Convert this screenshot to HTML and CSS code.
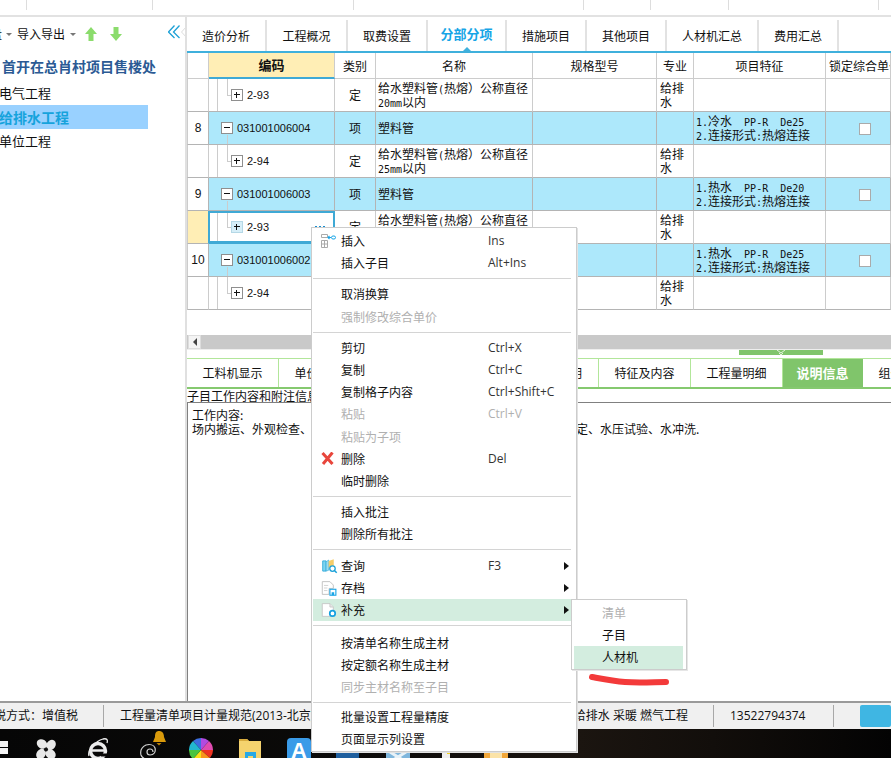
FILE: index.html
```html
<!DOCTYPE html>
<html lang="zh">
<head>
<meta charset="utf-8">
<title>分部分项</title>
<link rel="stylesheet" href="styles.css">
</head>
<body>
<div class="app">
  <div class="strip">
    <i class="s1"></i><i class="s2"></i><i class="s3"></i><i class="s4"></i><i class="s5"></i><i class="s6"></i><i class="s7"></i>
  </div>
  <div class="workspace">
    <aside class="side">
      <div class="tools">
        <span class="cut">盘</span><b class="caret c1"></b>
        <span class="tool-label">导入导出</span><b class="caret c2"></b>
        <svg class="arrow a1" width="12" height="14" viewBox="0 0 12 14"><path d="M6 0 12 7H8.500V14H3.500V7H0Z" fill="#8bdc6c"/></svg>
        <svg class="arrow a2" width="12" height="14" viewBox="0 0 12 14"><path d="M6 14 12 7H8.500V0H3.500V7H0Z" fill="#8bdc6c"/></svg>
        <svg class="collapse" width="20" height="14" viewBox="0 0 20 14"><path d="M6.500 .5 .5 7l6 6M11.500 .5 5.500 7l6 6" fill="none" stroke="#1ea1d6" stroke-width="1.300"/><path d="M19 1 13.500 7 19 13" fill="none" stroke="#ddd" stroke-width="1"/></svg>
      </div>
      <div class="side-title">首开在总肖村项目售楼处</div>
      <div class="side-item">电气工程</div>
      <div class="side-item on">给排水工程</div>
      <div class="side-item">单位工程</div>
    </aside>
    <main class="main">
      <nav class="tabs">
        <a class="tab">造价分析</a><a class="tab w81">工程概况</a><a class="tab">取费设置</a><a class="tab w79 on">分部分项</a><a class="tab">措施项目</a><a class="tab">其他项目</a><a class="tab w92">人材机汇总</a><a class="tab">费用汇总</a>
      </nav>
      <div class="grid-wrap">
        <table class="grid">
          <colgroup><col class="c-no"><col class="c-code"><col class="c-type"><col class="c-name"><col class="c-spec"><col class="c-major"><col class="c-feat"><col class="c-lock"></colgroup>
          <thead>
            <tr><th></th><th class="hl">编码</th><th>类别</th><th>名称</th><th>规格型号</th><th>专业</th><th>项目特征</th><th class="clip">锁定综合单价</th></tr>
          </thead>
          <tbody>
            <tr>
              <td></td><td class="code child"><div class="node"><span class="box plus"></span>2-93</div></td><td class="ctr">定</td>
              <td class="txt">给水塑料管<span class="m">(</span>热熔）公称直径<br><span class="m">20mm</span>以内</td><td></td><td class="txt major">给排水</td><td></td><td></td>
            </tr>
            <tr class="item">
              <td class="no">8</td><td class="code parent"><div class="node"><span class="box minus"></span>031001006004</div></td><td class="ctr">项</td>
              <td class="txt">塑料管</td><td></td><td></td><td class="txt"><span class="m">1.</span>冷水<span class="m">  PP-R  De25</span><br><span class="m">2.</span>连接形式<span class="m">:</span>热熔连接</td><td class="ctr lock"><span class="check"></span></td>
            </tr>
            <tr>
              <td></td><td class="code child"><div class="node"><span class="box plus"></span>2-94</div></td><td class="ctr">定</td>
              <td class="txt">给水塑料管<span class="m">(</span>热熔）公称直径<br><span class="m">25mm</span>以内</td><td></td><td class="txt major">给排水</td><td></td><td></td>
            </tr>
            <tr class="item">
              <td class="no">9</td><td class="code parent"><div class="node"><span class="box minus"></span>031001006003</div></td><td class="ctr">项</td>
              <td class="txt">塑料管</td><td></td><td></td><td class="txt"><span class="m">1.</span>热水<span class="m">  PP-R  De20</span><br><span class="m">2.</span>连接形式<span class="m">:</span>热熔连接</td><td class="ctr lock"><span class="check"></span></td>
            </tr>
            <tr>
              <td class="cur"></td><td class="code child sel"><div class="node"><span class="box plus pale"></span>2-93<span class="dots"></span></div></td><td class="ctr">定</td>
              <td class="txt">给水塑料管<span class="m">(</span>热熔）公称直径<br><span class="m">20mm</span>以内</td><td></td><td class="txt major">给排水</td><td></td><td></td>
            </tr>
            <tr class="item">
              <td class="no">10</td><td class="code parent"><div class="node"><span class="box minus"></span>031001006002</div></td><td class="ctr">项</td>
              <td class="txt">塑料管</td><td></td><td></td><td class="txt"><span class="m">1.</span>热水<span class="m">  PP-R  De25</span><br><span class="m">2.</span>连接形式<span class="m">:</span>热熔连接</td><td class="ctr lock"><span class="check"></span></td>
            </tr>
            <tr>
              <td></td><td class="code child"><div class="node"><span class="box plus"></span>2-94</div></td><td class="ctr">定</td>
              <td class="txt">给水塑料管<span class="m">(</span>热熔）公称直径<br><span class="m">25mm</span>以内</td><td></td><td class="txt major">给排水</td><td></td><td></td>
            </tr>
          </tbody>
        </table>
      </div>
      <div class="hscroll"><span class="hbtn"><b></b></span></div>
      <div class="splitter"><span class="grip"><svg width="10" height="5" viewBox="0 0 10 5"><path d="M1 0 5 3 9 0M3 3 5 5 7 3" fill="none" stroke="#e4f3de" stroke-width="1"/></svg></span></div>
      <nav class="subtabs">
        <a class="st w92">工料机显示</a><a class="st w80">单价构成</a><a class="st w80">标准换算</a><a class="st w80">换算信息</a><a class="st w80">安装费用</a><a class="st w92">特征及内容</a><a class="st w92">工程量明细</a><a class="st w80 on">说明信息</a><a class="st w80">组价方案</a>
      </nav>
      <div class="caption">子目工作内容和附注信息</div>
      <div class="notes">工作内容:<br>场内搬运、外观检查、切管、热熔连接、管道管件安装、栽钩件、管道固定、水压试验、水冲洗.</div>
    </main>
  </div>
  <footer class="status">
    <div class="sc s-tax"><span>计税方式：增值税</span></div>
    <div class="sc s-spec"><span>工程量清单项目计量规范(2013-北京)</span><span>北京市建设工程预算定额 给排水 采暖 燃气工程</span></div>
    <div class="sc s-tel">13522794374</div>
    <div class="s-btn"></div>
  </footer>
  <div class="taskbar">
    <svg class="t-win" width="9" height="20" viewBox="0 0 9 20"><path d="M0 3h8v6H0zM0 10h8v6H0z" fill="#f4f4f4"/></svg>
    <svg class="t-fan" width="22" height="24" viewBox="0 0 22 24"><g fill="#e8e8e8"><ellipse cx="7" cy="6" rx="5.500" ry="4.500" transform="rotate(35 7 6)"/><ellipse cx="16" cy="7" rx="4.500" ry="5.500" transform="rotate(35 16 7)"/><ellipse cx="15.500" cy="16" rx="5.500" ry="4.500" transform="rotate(35 15.500 16)"/><ellipse cx="6" cy="16" rx="4.500" ry="5.500" transform="rotate(35 6 16)"/></g><circle cx="11" cy="11.500" r="2" fill="#111"/></svg>
    <svg class="t-ie" width="22" height="24" viewBox="0 0 22 24"><circle cx="11" cy="13" r="7.500" fill="none" stroke="#ececec" stroke-width="3.500"/><path d="M4 12.500h14" stroke="#ececec" stroke-width="2.500"/><path d="M14 15.500h8v3h-8z" fill="#0a0908"/><path d="M2 18C0 12 9 3 16 1c4-1 5 1 4 4" fill="none" stroke="#ececec" stroke-width="1.300"/></svg>
    <svg class="t-swirl" width="29" height="35" viewBox="0 -11 29 35"><path d="M15 14a3 3 0 1 0-3 3c4 0 6-3 5-7-1-3-5-4-9-3-4 2-6 6-5 10 1 3 5 5 8 4" fill="none" stroke="#cfcfcf" stroke-width="1.200"/><path d="M21 -7c3 0 5 2 5 6l2 5H15l2-5c0-4 1-6 4-6z" fill="#d99a0b"/><path d="M18.500 5h5l-2.500 2.500z" fill="#b87f07"/></svg>
    <svg class="t-pie" width="24" height="24" viewBox="0 0 24 24"><path d="M12 12 4 3a12 12 0 0 1 8-3z" fill="#3c6fe0"/><path d="M12 12V0a12 12 0 0 1 8 3z" fill="#b14be0"/><path d="M12 12 20 3a12 12 0 0 1 4 9z" fill="#e04bb0"/><path d="M12 12h12a12 12 0 0 1-3 8z" fill="#ee3322"/><path d="M12 12l9 8a12 12 0 0 1-9 4z" fill="#f7941d"/><path d="M12 12v12a12 12 0 0 1-8-3z" fill="#f7e018"/><path d="M12 12l-8 9a12 12 0 0 1-4-9z" fill="#49c43f"/><path d="M12 12H0a12 12 0 0 1 4-9z" fill="#22b8d0"/></svg>
    <svg class="t-folder" width="22" height="24" viewBox="0 0 22 24"><path d="M0 1h8l2 2h12v21H0z" fill="#f5d36e"/><path d="M0 1h8l2 2H0z" fill="#d9ac3e"/><path d="M6 14h11v10H6z" fill="#28a8e6"/><path d="M9 18h5v6H9z" fill="#f5d36e"/></svg>
    <svg class="t-app" width="24" height="24" viewBox="0 0 24 24"><rect width="24" height="24" rx="4" fill="#3a9be8"/><text x="12" y="20" text-anchor="middle" class="t-a">A</text></svg>
    <svg class="t-db" width="23" height="24" viewBox="0 0 23 24"><rect width="23" height="24" fill="#1f5f9e"/></svg>
    <svg class="t-blue" width="24" height="24" viewBox="0 0 24 24"><rect width="24" height="24" fill="#7fb6dc"/><path d="M4 14l16 10M20 14 4 24" stroke="#e8f2f8" stroke-width="3"/></svg>
    <svg class="t-doc" width="8" height="24" viewBox="0 0 8 24"><rect y="15" width="8" height="9" fill="#eee"/><rect x="5" y="13" width="3" height="3" fill="#f2d21b"/></svg>
    <svg class="t-orange" width="24" height="24" viewBox="0 0 24 24"><rect y="12" width="24" height="12" rx="2" fill="#f2a73a"/><rect x="6" y="14" width="12" height="10" fill="#fbe3a8"/></svg>
  </div>

  <div class="menu">
    <div class="mi"><span class="ic"><svg width="15" height="15" viewBox="0 0 15 15"><path d="M.5 .5h6v3h-6zM.5 6.500h6v7h-6zM3.500 6.500v7M.5 10h6" fill="none" stroke="#aaa"/><path d="M7 3.500h3M8.500 2 7 3.500 8.500 5" fill="none" stroke="#19a5e6" stroke-width="1.100"/><rect x="10.500" y="2" width="4" height="3" rx="1.500" fill="none" stroke="#19a5e6"/></svg></span><span>插入</span><span class="key">Ins</span></div>
    <div class="mi"><span class="ic"></span><span>插入子目</span><span class="key">Alt+Ins</span></div>
    <hr>
    <div class="mi"><span class="ic"></span><span>取消换算</span></div>
    <div class="mi off"><span class="ic"></span><span>强制修改综合单价</span></div>
    <hr>
    <div class="mi"><span class="ic"></span><span>剪切</span><span class="key">Ctrl+X</span></div>
    <div class="mi"><span class="ic"></span><span>复制</span><span class="key">Ctrl+C</span></div>
    <div class="mi"><span class="ic"></span><span>复制格子内容</span><span class="key">Ctrl+Shift+C</span></div>
    <div class="mi off"><span class="ic"></span><span>粘贴</span><span class="key">Ctrl+V</span></div>
    <div class="mi off"><span class="ic"></span><span>粘贴为子项</span></div>
    <div class="mi"><span class="ic"><svg width="13" height="13" viewBox="0 0 13 13"><path d="M1.500 1 11.500 12M11.500 .5 2 12" fill="none" stroke="#e8463c" stroke-width="3"/></svg></span><span>删除</span><span class="key">Del</span></div>
    <div class="mi"><span class="ic"></span><span>临时删除</span></div>
    <hr>
    <div class="mi"><span class="ic"></span><span>插入批注</span></div>
    <div class="mi"><span class="ic"></span><span>删除所有批注</span></div>
    <hr>
    <div class="mi"><span class="ic"><svg width="17" height="16" viewBox="0 0 20 18"><path d="M2 3h4v12H2z" fill="#7fd4ef" stroke="#2aa8d8"/><path d="M6 4 9 2v12L6 15z" fill="#9adcf2" stroke="#2aa8d8" stroke-width=".7"/><path d="M9 3l6-2v10H9z" fill="#f5cd6a"/><circle cx="13.500" cy="12" r="3.200" fill="#fff" stroke="#19a0d8" stroke-width="1.500"/><path d="M16 14.500 18.500 17" stroke="#19a0d8" stroke-width="1.800"/></svg></span><span>查询</span><span class="key">F3</span><b class="more"></b></div>
    <div class="mi"><span class="ic"><svg width="17" height="16" viewBox="0 0 20 18"><path d="M1.500 1.500h9l4 4v4h-5v7h-8z" fill="#fff" stroke="#bbb"/><path d="M3.500 6h5M3.500 9h4M3.500 12h4" stroke="#ccc"/><rect x="10.500" y="10.500" width="7" height="7" fill="#fff" stroke="#19a5e6" stroke-width="1.300"/><rect x="12.500" y="14" width="3" height="3.500" fill="#19a5e6"/></svg></span><span>存档</span><b class="more"></b></div>
    <div class="mi hot"><span class="ic"><svg width="17" height="16" viewBox="0 0 20 18"><path d="M1.500 1.500h9l4 4v11h-13z" fill="#fff" stroke="#c4c4c4"/><path d="M10.500 1.500v4h4" fill="#e8e8e8" stroke="#c4c4c4"/><circle cx="13.500" cy="13" r="3.200" fill="#fff" stroke="#14a0e0" stroke-width="2"/></svg></span><span>补充</span><b class="more"></b></div>
    <hr class="tall">
    <div class="mi"><span class="ic"></span><span>按清单名称生成主材</span></div>
    <div class="mi"><span class="ic"></span><span>按定额名称生成主材</span></div>
    <div class="mi off"><span class="ic"></span><span>同步主材名称至子目</span></div>
    <hr class="tight">
    <div class="mi"><span class="ic"></span><span>批量设置工程量精度</span></div>
    <div class="mi"><span class="ic"></span><span>页面显示列设置</span></div>
  </div>

  <div class="submenu">
    <div class="si off">清单</div>
    <div class="si">子目</div>
    <div class="si hot">人材机</div>
  </div>
  <svg class="scribble" width="84" height="16" viewBox="0 0 84 16"><path d="M5 5C16 7 26 9 38 10 52 11 68 10 79 10" fill="none" stroke="#f33a3a" stroke-width="6" stroke-linecap="round"/></svg>
</div>
</body>
</html>
```
FILE: styles.css
```css
* { box-sizing: border-box; }
html, body { margin: 0; padding: 0; }
body {
  width: 891px;
  height: 758px;
  overflow: hidden;
  background: #fff;
  color: #111;
  font: 12px/14px "Noto Sans CJK SC", "Liberation Sans", sans-serif;
}
.app { position: relative; width: 891px; height: 758px; overflow: hidden; display: flex; flex-direction: column; }

/* top strip */
.strip { flex: none; height: 17px; display: flex; align-items: flex-start; border-bottom: 2px solid #e2e2e2; }
.strip i { display: block; height: 10px; border-right: 1px solid #ddd; flex: none; }
.s1 { width: 27px; } .s2 { width: 126px; } .s3 { width: 201px; } .s4 { width: 230px; }
.s5 { width: 67px; } .s6 { width: 78px; } .s7 { width: 150px; }

.workspace { flex: none; height: 684px; display: flex; }

/* sidebar */
.side { flex: none; width: 187px; border-right: 2px solid #e0e0e0; overflow: hidden; }
.tools { height: 34px; display: flex; align-items: center; }
.cut { margin-left: -10px; width: 12px; flex: none; }
.caret { flex: none; width: 0; height: 0; border: 3px solid transparent; border-top: 3px solid #777; border-bottom: 0; }
.c1 { margin-left: 4px; }
.tool-label { margin-left: 5px; flex: none; }
.c2 { margin-left: 5px; }
.a1 { margin-left: 9px; flex: none; }
.a2 { margin-left: 13px; flex: none; }
.collapse { margin-left: 46px; flex: none; margin-top: -5px; }
.side-title { height: 30px; line-height: 30px; padding-left: 2px; font-size: 14px; font-weight: 700; color: #2b5a94; white-space: nowrap; }
.side-item { height: 24px; line-height: 24px; width: 148px; font-size: 13px; text-indent: -1px; }
.side-item.on { background: #99d1ff; color: #16a3dc; font-size: 14px; font-weight: 700; }

/* main */
.main { flex: none; width: 704px; display: flex; flex-direction: column; overflow: hidden; }
.tabs { flex: none; height: 36px; padding-top: 3px; display: flex; border-bottom: 2px solid #3fb0dc; }
.tab { flex: none; width: 80px; height: 31px; line-height: 31px; text-align: center; border-right: 2px solid #e2e2e2; position: relative; white-space: nowrap; }
.tab.w79 { width: 79px; }
.tab.w81 { width: 81px; }
.tab.w92 { width: 92px; }
.tab.on { color: #16a5e6; font-size: 13px; font-weight: 700; line-height: 28px; }
.tab.on::after { content: ""; position: absolute; left: 35px; bottom: 0; border: 4px solid transparent; border-bottom: 4px solid #3fb0dc; border-top: 0; }

.grid-wrap { flex: none; height: 282px; overflow: hidden; }
.grid { table-layout: fixed; width: 704px; border-collapse: separate; border-spacing: 0; }
.c-no { width: 22px; } .c-code { width: 126px; } .c-type { width: 41px; } .c-name { width: 157px; }
.c-spec { width: 124px; } .c-major { width: 37px; } .c-feat { width: 132px; } .c-lock { width: 65px; }
.grid th { height: 26px; padding: 0; font-weight: 400; text-align: center; border-right: 1px solid #ccc; border-bottom: 1px solid #ccc; white-space: nowrap; }
.grid th.hl { background: #ffeeb5; font-size: 13px; font-weight: 700; border-bottom: 2px solid #3fa9d5; }
.grid th.clip { overflow: hidden; text-align: left; padding-left: 3px; }
.grid td { height: 33px; padding: 0; border-right: 1px solid #ccc; border-bottom: 1px solid #b4b4b4; vertical-align: middle; overflow: hidden; }
.grid td:first-child, .grid th:first-child { border-left: 1px solid #ccc; }
.grid .item td { background: #ade8fb; border-right-color: #b4b4b4; }
.grid .item td:first-child { background: #fff; }
.grid td.no { text-align: center; font-family: "Liberation Sans", sans-serif; font-size: 12px; }
.grid td.cur { background: #ffeeb5; border-right-color: #3fa9d5; }
.ctr { text-align: center; }
.grid td.lock { padding-left: 14px; }
.txt { padding: 0 2px !important; line-height: 14px; white-space: pre-wrap; }
.grid td.major { padding-left: 3px !important; }
.m { font-family: "DejaVu Sans Mono", monospace; font-size: 10px; line-height: 0; white-space: pre; }
.check { display: inline-block; width: 12px; height: 12px; background: #fff; border: 1px solid #aaa; vertical-align: middle; }

.node { display: flex; align-items: center; gap: 4px; font: 11px/14px "Liberation Sans", sans-serif; }
.child .node { padding-left: 22px; }
.parent .node { padding-left: 12px; }
.grid td.child {
  background:
    linear-gradient(#ccc, #ccc) 8px 0 / 1px 100% no-repeat,
    linear-gradient(#ccc, #ccc) 18px 0 / 1px 16px no-repeat,
    linear-gradient(#ccc, #ccc) 18px 16px / 4px 1px no-repeat;
}
.grid .item td.parent {
  background:
    linear-gradient(#ccc, #ccc) 18px 23px / 1px 10px no-repeat,
    #ade8fb;
}
.box { flex: none; width: 12px; height: 12px; background: #fff; border: 1px solid #8f8f8f; position: relative; }
.box::before { content: ""; position: absolute; left: 2px; right: 2px; top: 4px; height: 1px; background: #111; }
.plus::after { content: ""; position: absolute; top: 2px; bottom: 2px; left: 4px; width: 1px; background: #111; }
.box.pale { background: #d6eef8; border-color: #b5d8e6; }
.grid td.sel { box-shadow: inset 1px 0 0 #3fa9d5, inset -1px 0 0 #3fa9d5, inset 0 2px 0 #3fa9d5, inset 0 -2px 0 #3fa9d5; border-right-color: #3fa9d5; border-bottom-color: #3fa9d5; }
.dots { margin-left: auto; margin-right: 9px; width: 10px; height: 2px; background: repeating-linear-gradient(90deg, #1a8fd0 0 2px, transparent 2px 4px); }

/* scrollbar + splitter */
.hscroll { flex: none; height: 14px; background: #c9c9c9; padding-left: 1px; }
.hbtn { display: flex; align-items: center; justify-content: center; width: 13px; height: 14px; background: #f4f4f4; border: 1px solid #ddd; }
.hbtn b { width: 0; height: 0; border: 4px solid transparent; border-right: 4px solid #444; border-left: 0; }
.splitter { flex: none; height: 9px; border-top: 1px solid #eee; padding-left: 552px; }
.grip { display: flex; justify-content: center; width: 84px; height: 5px; background: #80c56b; }

/* lower tabs */
.subtabs { flex: none; height: 31px; display: flex; border-top: 1px solid #b2e69a; border-bottom: 2px solid #85c96f; }
.st { flex: none; height: 28px; line-height: 28px; text-align: center; border-right: 1px solid #b2e69a; white-space: nowrap; }
.w80 { width: 80px; } .w92 { width: 92px; }
.st.on { background: #80c56b; color: #fff; font-size: 13px; font-weight: 700; border-right-color: #80c56b; }
.caption { flex: none; height: 13px; line-height: 13px; white-space: nowrap; }
.notes { flex: 1; border-top: 1px solid #808080; border-left: 1px solid #808080; padding: 5px 4px; line-height: 14px; white-space: nowrap; }

/* status bar */
.status { flex: none; height: 28px; display: flex; background: #f0f0f0; border-top: 2px solid #9a9a9a; font-family: "Open Sans", "Noto Sans CJK SC", sans-serif; align-items: stretch; }
.sc { flex: none; display: flex; align-items: center; overflow: hidden; white-space: nowrap; position: relative; }
.sc::after { content: ""; position: absolute; right: 0; top: 2px; bottom: 2px; width: 1px; background: #a8a8a8; }
.s-tax { width: 104px; justify-content: flex-end; padding-right: 26px; }
.s-spec { width: 610px; padding: 0 26px 0 16px; justify-content: space-between; }
.s-tel { width: 120px; padding-left: 16px; }
.s-btn { margin: 2px 0 2px 26px; width: 40px; background: #3fb6e3; border-radius: 2px; }

/* taskbar */
.taskbar { flex: none; height: 29px; padding-top: 9px; display: flex; align-items: flex-start; overflow: hidden; background: linear-gradient(90deg, #060606 0, #0b0a09 40%, #1b1510 65%, #120e0b 80%, #030303 100%); }
.taskbar svg { flex: none; }
.t-fan { margin-left: 26px; }
.t-ie { margin-left: 30px; }
.t-swirl { margin-left: 29px; margin-top: -11px; }
.t-pie { margin-left: 22px; }
.t-folder { margin-left: 26px; }
.t-app { margin-left: 26px; }
.t-a { font: 700 22px "Liberation Sans", sans-serif; fill: #fff; }
.t-db { margin-left: 25px; }
.t-blue { margin-left: 27px; }
.t-doc { margin-left: 32px; }
.t-orange { margin-left: 34px; }

/* context menu */
.menu { position: absolute; left: 311px; top: 227px; width: 266px; height: 525px; padding: 2px 5px 0 1px; background: #fff; border: 1px solid #ccc; box-shadow: 1px 1px 0 #e2e2e2; }
.mi { height: 22.2px; display: grid; grid-template-columns: 28px 147px 1fr auto; align-items: center; line-height: 22px; }
.mi .ic { display: flex; align-items: center; padding-left: 8px; height: 22px; }
.key { font-family: "Open Sans", "Liberation Sans", sans-serif; color: #333; white-space: nowrap; }
.mi.off, .mi.off .key { color: #b0b0b0; }
.mi.hot { background: #d3eddf; }
.more { grid-column: 4; width: 0; height: 0; margin-right: 2px; border: 4px solid transparent; border-left: 5px solid #111; border-right: 0; }
.menu hr { margin: 4px 0; height: 1px; border: 0; background: #d4d4d4; }
.menu hr.tall { margin-bottom: 6px; }
.menu hr.tight { margin: 3px 0; }

.submenu { position: absolute; left: 571px; top: 599px; width: 116px; height: 71px; padding: 2px; background: #fff; border: 1px solid #ccc; box-shadow: 1px 1px 0 #e6e6e6; }
.si { height: 22.2px; line-height: 22px; padding-left: 28px; margin-right: 1px; }
.si.off { color: #b0b0b0; }
.si.hot { background: #d3eddf; }
.scribble { position: absolute; left: 587px; top: 672px; }
```
